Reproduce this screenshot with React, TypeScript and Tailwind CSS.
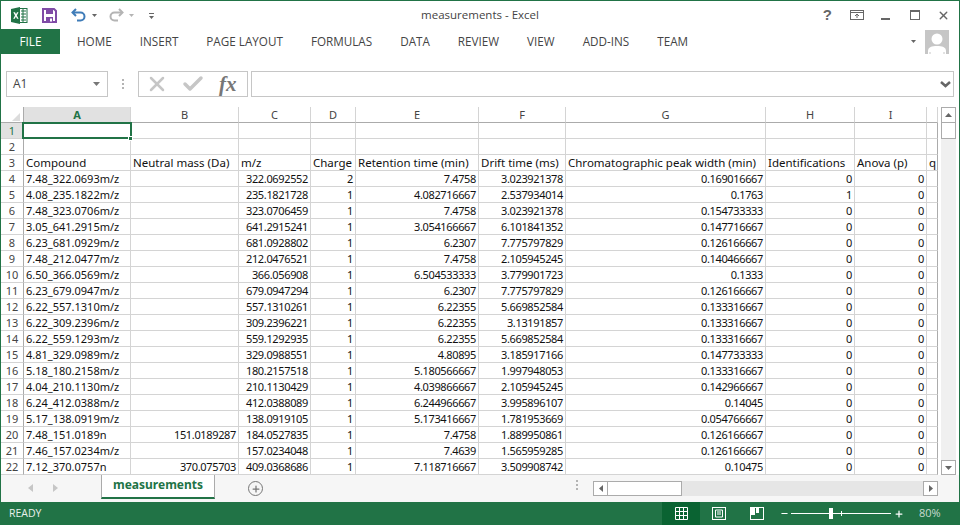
import { Minus, Plus, X, Check } from "lucide-react";

const columns = [
  { label: "A", width: 107 },
  { label: "B", width: 108 },
  { label: "C", width: 72 },
  { label: "D", width: 45 },
  { label: "E", width: 123 },
  { label: "F", width: 87 },
  { label: "G", width: 200 },
  { label: "H", width: 89 },
  { label: "I", width: 72 },
  { label: "", width: 11 },
];

const rows: string[][] = [
  ["7.48_322.0693m/z", "", "322.0692552", "2", "7.4758", "3.023921378", "0.169016667", "0", "0"],
  ["4.08_235.1822m/z", "", "235.1821728", "1", "4.082716667", "2.537934014", "0.1763", "1", "0"],
  ["7.48_323.0706m/z", "", "323.0706459", "1", "7.4758", "3.023921378", "0.154733333", "0", "0"],
  ["3.05_641.2915m/z", "", "641.2915241", "1", "3.054166667", "6.101841352", "0.147716667", "0", "0"],
  ["6.23_681.0929m/z", "", "681.0928802", "1", "6.2307", "7.775797829", "0.126166667", "0", "0"],
  ["7.48_212.0477m/z", "", "212.0476521", "1", "7.4758", "2.105945245", "0.140466667", "0", "0"],
  ["6.50_366.0569m/z", "", "366.056908", "1", "6.504533333", "3.779901723", "0.1333", "0", "0"],
  ["6.23_679.0947m/z", "", "679.0947294", "1", "6.2307", "7.775797829", "0.126166667", "0", "0"],
  ["6.22_557.1310m/z", "", "557.1310261", "1", "6.22355", "5.669852584", "0.133316667", "0", "0"],
  ["6.22_309.2396m/z", "", "309.2396221", "1", "6.22355", "3.13191857", "0.133316667", "0", "0"],
  ["6.22_559.1293m/z", "", "559.1292935", "1", "6.22355", "5.669852584", "0.133316667", "0", "0"],
  ["4.81_329.0989m/z", "", "329.0988551", "1", "4.80895", "3.185917166", "0.147733333", "0", "0"],
  ["5.18_180.2158m/z", "", "180.2157518", "1", "5.180566667", "1.997948053", "0.133316667", "0", "0"],
  ["4.04_210.1130m/z", "", "210.1130429", "1", "4.039866667", "2.105945245", "0.142966667", "0", "0"],
  ["6.24_412.0388m/z", "", "412.0388089", "1", "6.244966667", "3.995896107", "0.14045", "0", "0"],
  ["5.17_138.0919m/z", "", "138.0919105", "1", "5.173416667", "1.781953669", "0.054766667", "0", "0"],
  ["7.48_151.0189n", "151.0189287", "184.0527835", "1", "7.4758", "1.889950861", "0.126166667", "0", "0"],
  ["7.46_157.0234m/z", "", "157.0234048", "1", "7.4639", "1.565959285", "0.126166667", "0", "0"],
  ["7.12_370.0757n", "370.075703", "409.0368686", "1", "7.118716667", "3.509908742", "0.10475", "0", "0"],
];

const headerRow = [
  "Compound",
  "Neutral mass (Da)",
  "m/z",
  "Charge",
  "Retention time (min)",
  "Drift time (ms)",
  "Chromatographic peak width (min)",
  "Identifications",
  "Anova (p)",
  "q",
];

const tabs = ["HOME", "INSERT", "PAGE LAYOUT", "FORMULAS", "DATA", "REVIEW", "VIEW", "ADD-INS", "TEAM"];

function QuickAccess() {
  return (
    <div className="flex items-center">
      <svg width="17" height="17" viewBox="0 0 17 17" className="ml-[10px]">
        <rect x="5" y="1.5" width="11" height="14" fill="#fff" stroke="#217346" />
        <path d="M10 4h5M10 7h5M10 10h5M10 13h5M12 2v13" stroke="#217346" />
        <path d="M0 2l9-2v17l-9-2z" fill="#217346" />
        <path d="M2.3 5.2h1.7l1 2 1-2h1.5l-1.7 3.2 1.8 3.3H6l-1.1-2.1-1.1 2.1H2.2l1.8-3.3z" fill="#fff" />
      </svg>
      <svg width="15" height="15" viewBox="0 0 15 15" className="ml-[14px]">
        <path d="M1 1h11l2 2v11H1z" fill="none" stroke="#7f4ba6" strokeWidth="2" />
        <rect x="4" y="1" width="7" height="5" fill="#7f4ba6" />
        <rect x="4" y="9" width="7" height="5" fill="#7f4ba6" />
        <rect x="8" y="10.5" width="2" height="3" fill="#fff" />
      </svg>
      <svg width="16" height="14" viewBox="0 0 16 14" className="ml-[14px]">
        <path d="M5 1L1.5 4.5 5 8" fill="none" stroke="#3f7cb8" strokeWidth="2" />
        <path d="M2 4.5h7.5a4 4 0 0 1 0 8H6" fill="none" stroke="#3f7cb8" strokeWidth="2" />
      </svg>
      <svg width="5" height="3" viewBox="0 0 5 3" className="ml-[5px]">
        <path d="M0 0h5L2.5 3z" fill="#666" />
      </svg>
      <svg width="16" height="14" viewBox="0 0 16 14" className="ml-[11px]">
        <path d="M11 1l3.5 3.5L11 8" fill="none" stroke="#b4b4b4" strokeWidth="2" />
        <path d="M14 4.5H6.5a4 4 0 0 0 0 8H10" fill="none" stroke="#b4b4b4" strokeWidth="2" />
      </svg>
      <svg width="5" height="3" viewBox="0 0 5 3" className="ml-[5px]">
        <path d="M0 0h5L2.5 3z" fill="#b4b4b4" />
      </svg>
      <svg width="5" height="7" viewBox="0 0 5 7" className="ml-[15px] mt-[2px]">
        <path d="M0 0h5v1H0zM0 3h5L2.5 6z" fill="#666" />
      </svg>
    </div>
  );
}

function WindowControls() {
  return (
    <div className="flex items-center text-[#666]">
      <span className="font-['Liberation_Sans',sans-serif] text-[15px] font-bold">?</span>
      <svg width="14" height="10" viewBox="0 0 14 10" className="ml-[18px]">
        <rect x="0.5" y="0.5" width="13" height="9" fill="none" stroke="#666" />
        <path d="M0 2.5h14M7 8V4M5 6l2-2 2 2" fill="none" stroke="#666" />
      </svg>
      <div className="ml-[17px] mt-[8px] h-[2px] w-[9px] bg-[#666]" />
      <div className="ml-[20px] h-[10px] w-[10px] border border-t-2 border-[#666]" />
      <X size={13} strokeWidth={2.5} className="ml-[17px]" />
    </div>
  );
}

function Avatar() {
  return (
    <svg width="24" height="24" viewBox="0 0 24 24">
      <rect width="24" height="24" fill="#c6c6c6" />
      <circle cx="12" cy="9" r="5.5" fill="#fff" />
      <path d="M3 24v-3c0-4 4-5 9-5s9 1 9 5v3z" fill="#fff" />
      <path d="M5 24v-2M19 24v-2" stroke="#c6c6c6" />
    </svg>
  );
}

function FormulaBar() {
  return (
    <div className="mt-[17px] flex h-[26px] items-stretch pl-[5px] pr-[5px]">
      <div className="flex w-[102px] items-center justify-between border border-[#c6c6c6] pl-[6px] pr-[7px] text-[12px] text-[#444]">
        <span>A1</span>
        <svg width="7" height="4" viewBox="0 0 7 4">
          <path d="M0 0h7L3.5 4z" fill="#777" />
        </svg>
      </div>
      <div className="mx-[14px] flex w-[2px] flex-col items-center justify-center gap-[2px]">
        <div className="h-[2px] w-[2px] bg-[#b4b4b4]" />
        <div className="h-[2px] w-[2px] bg-[#b4b4b4]" />
        <div className="h-[2px] w-[2px] bg-[#b4b4b4]" />
      </div>
      <div className="flex w-[110px] items-center border border-[#c6c6c6] pl-[6px]">
        <X size={24} strokeWidth={2.5} className="text-[#c6c6c6]" />
        <Check size={24} strokeWidth={3.5} className="ml-[12px] text-[#c6c6c6]" />
        <span className="ml-[14px] font-['Liberation_Serif',serif] text-[21px] font-bold italic leading-none text-[#777]">
          fx
        </span>
      </div>
      <div className="ml-[3px] flex flex-1 items-center justify-end border border-[#c6c6c6] pr-[2px]">
        <svg width="11" height="7" viewBox="0 0 11 7">
          <path d="M1 1l4.5 4L10 1" fill="none" stroke="#666" strokeWidth="2.5" />
        </svg>
      </div>
    </div>
  );
}

function Sheet() {
  const template = `23px ${columns.map((c) => `${c.width}px`).join(" ")}`;
  const cell = "h-[16px] overflow-hidden whitespace-nowrap border-b border-r border-[#d4d4d4] px-[2px] leading-[15px] text-[#111]";
  const edge = "border-r-[#ababab]";
  const head = "h-[16px] border-b border-r border-[#ababab] border-b-[#d4d4d4] text-center text-[11px] leading-[15px]";
  return (
    <div className="relative flex-1 font-['Noto_Sans',sans-serif]">
      <div className="grid w-[937px]" style={{ gridTemplateColumns: template }}>
        {/* column letters */}
        <div className="relative h-[16px] border-b border-r border-[#ababab] bg-white">
          <svg width="8" height="8" viewBox="0 0 8 8" className="absolute bottom-[1px] right-[3px]">
            <path d="M8 0v8H0z" fill="#dcdcdc" />
          </svg>
        </div>
        {columns.map((c) => (
          <div
            key={c.label}
            className={`h-[16px] border-b border-r border-[#ababab] border-r-[#d4d4d4] text-center text-[11px] leading-[15px] ${
              c.label === "A" ? "bg-[#e1e1e1] font-bold text-[#217346]" : "text-[#444]"
            }`}
          >
            {c.label}
          </div>
        ))}

        {[1, 2].map((n) => (
          <div key={n} className="contents">
            <div className={`${head} ${n === 1 ? "bg-[#e1e1e1] text-[#217346]" : "text-[#444]"}`}>{n}</div>
            {columns.map((c) => (
              <div key={c.label} className={`${cell} ${c.label === "" ? edge : ""}`} />
            ))}
          </div>
        ))}

        <div className={`${head} text-[#444]`}>3</div>
        {headerRow.map((h) => (
          <div key={h} className={`${cell} text-[11.5px] ${h === "q" ? edge : ""}`}>
            {h}
          </div>
        ))}

        {rows.map((row, i) => (
          <div key={row[0]} className="contents">
            <div className={`${head} text-[#444]`}>{i + 4}</div>
            {row.map((v, j) => (
              <div
                key={j}
                className={`${cell} text-[11px] ${j === 0 ? "text-left" : "text-right tracking-[-0.35px]"}`}
              >
                {v}
              </div>
            ))}
            <div className={`${cell} ${edge}`} />
          </div>
        ))}
      </div>

      {/* selected cell */}
      <div className="absolute left-[21px] top-[15px] h-[17px] w-[110px] border-2 border-[#217346]">
        <div className="absolute -bottom-[4px] -right-[3px] h-[5px] w-[5px] border border-white bg-[#217346]" />
      </div>

      {/* vertical scrollbar */}
      <div className="absolute bottom-0 left-[940px] top-0 flex w-[15px] flex-col bg-[#f0f0f0]">
        <div className="flex h-[16px] items-center justify-center border border-[#ababab] bg-white">
          <svg width="7" height="4" viewBox="0 0 7 4">
            <path d="M0 4h7L3.5 0z" fill="#666" />
          </svg>
        </div>
        <div className="h-[16px] border border-t-0 border-[#ababab] bg-white" />
        <div className="flex-1" />
        <div className="flex h-[15px] items-center justify-center border border-[#ababab] bg-white">
          <svg width="7" height="4" viewBox="0 0 7 4">
            <path d="M0 0h7L3.5 4z" fill="#666" />
          </svg>
        </div>
      </div>
    </div>
  );
}

function SheetTabs() {
  return (
    <div className="flex h-[27px] items-start bg-[#f6f6f6] font-['Noto_Sans',sans-serif]">
      <div className="flex w-[100px] items-center gap-[20px] pl-[27px] pt-[9px]">
        <svg width="5" height="8" viewBox="0 0 5 8">
          <path d="M5 0v8L0 4z" fill="#c6c6c6" />
        </svg>
        <svg width="5" height="8" viewBox="0 0 5 8">
          <path d="M0 0v8l5-4z" fill="#c6c6c6" />
        </svg>
      </div>
      <div className="-mt-px flex h-[25px] w-[114px] items-center justify-center border-x border-b-2 border-[#ababab] border-b-[#217346] bg-white pb-[2px] text-[12px] font-bold text-[#217346]">
        measurements
      </div>
      <div className="ml-[33px] mt-[6px] flex h-[15px] w-[15px] items-center justify-center rounded-full border border-[#777]">
        <Plus size={10} strokeWidth={3} className="text-[#777]" />
      </div>
      <div className="ml-[313px] mt-[5px] flex h-[12px] w-[2px] flex-col gap-[2px]">
        <div className="h-[2px] w-[2px] bg-[#b4b4b4]" />
        <div className="h-[2px] w-[2px] bg-[#b4b4b4]" />
        <div className="h-[2px] w-[2px] bg-[#b4b4b4]" />
      </div>
      <div className="ml-[15px] mt-[6px] flex h-[15px] w-[345px] bg-[#e6e6e6]">
        <div className="flex w-[15px] items-center justify-center border border-[#ababab] bg-white">
          <svg width="4" height="7" viewBox="0 0 4 7">
            <path d="M4 0v7L0 3.5z" fill="#666" />
          </svg>
        </div>
        <div className="w-[74px] border border-l-0 border-[#ababab] bg-white" />
        <div className="flex-1" />
        <div className="flex w-[15px] items-center justify-center border border-[#ababab] bg-white">
          <svg width="4" height="7" viewBox="0 0 4 7">
            <path d="M0 0v7l4-3.5z" fill="#666" />
          </svg>
        </div>
      </div>
    </div>
  );
}

function StatusBar() {
  return (
    <div className="flex h-[23px] items-center bg-[#217346] pl-[8px] text-[10.5px] text-[#e8f0eb]">
      <span>READY</span>
      <div className="ml-auto flex h-full items-center">
        <div className="flex h-full w-[38px] items-center justify-center bg-[#0a6332]">
          <svg width="13" height="13" viewBox="0 0 13 13">
            <path d="M0.5 0.5h12v12H0.5zM4.5 0v13M8.5 0v13M0 4.5h13M0 8.5h13" fill="none" stroke="#fff" />
          </svg>
        </div>
        <svg width="14" height="13" viewBox="0 0 14 13" className="ml-[12px]">
          <rect x="0.5" y="0.5" width="13" height="12" fill="none" stroke="#fff" />
          <path d="M3.5 3h7v7h-7zM5 5h4M5 7h4" fill="none" stroke="#fff" />
        </svg>
        <svg width="14" height="13" viewBox="0 0 14 13" className="ml-[24px]">
          <rect x="0.5" y="0.5" width="13" height="12" fill="none" stroke="#fff" />
          <path d="M1 1h4v7H1zM6 1h3v5H6z" fill="#fff" />
        </svg>
        <Minus size={9} strokeWidth={3} className="ml-[16px] text-white" />
        <div className="relative ml-[2px] h-px w-[100px] bg-white">
          <div className="absolute left-[38px] -top-[5px] h-[11px] w-[4px] bg-white" />
          <div className="absolute left-[50px] -top-[2px] h-[5px] w-px bg-white" />
        </div>
        <Plus size={10} strokeWidth={3} className="ml-[3px] text-white" />
        <span className="ml-[15px] w-[40px] text-[11px] text-[#c9dcd0]">80%</span>
      </div>
    </div>
  );
}

export default function App() {
  return (
    <div className="flex h-[525px] w-[960px] flex-col overflow-hidden border-x border-t border-[#217346] bg-white font-['Open_Sans',sans-serif]">
      <div className="relative flex h-[28px] items-center justify-between pr-[9px]">
        <QuickAccess />
        <span className="absolute left-1/2 -translate-x-1/2 text-[11.5px] text-[#444]">measurements - Excel</span>
        <WindowControls />
      </div>

      <div className="flex h-[25px] items-center text-[11.7px] text-[#444]">
        <div className="flex h-full w-[59px] items-center justify-center bg-[#217346] text-white">FILE</div>
        <div className="ml-[17px] flex gap-[28px]">
          {tabs.map((t) => (
            <span key={t}>{t}</span>
          ))}
        </div>
        <div className="ml-auto mr-[10px] flex items-center">
          <svg width="5" height="3" viewBox="0 0 5 3" className="mr-[9px]">
            <path d="M0 0h5L2.5 3z" fill="#666" />
          </svg>
          <Avatar />
        </div>
      </div>

      <FormulaBar />

      <div className="h-[10px]" />
      <Sheet />
      <SheetTabs />
      <StatusBar />
    </div>
  );
}
